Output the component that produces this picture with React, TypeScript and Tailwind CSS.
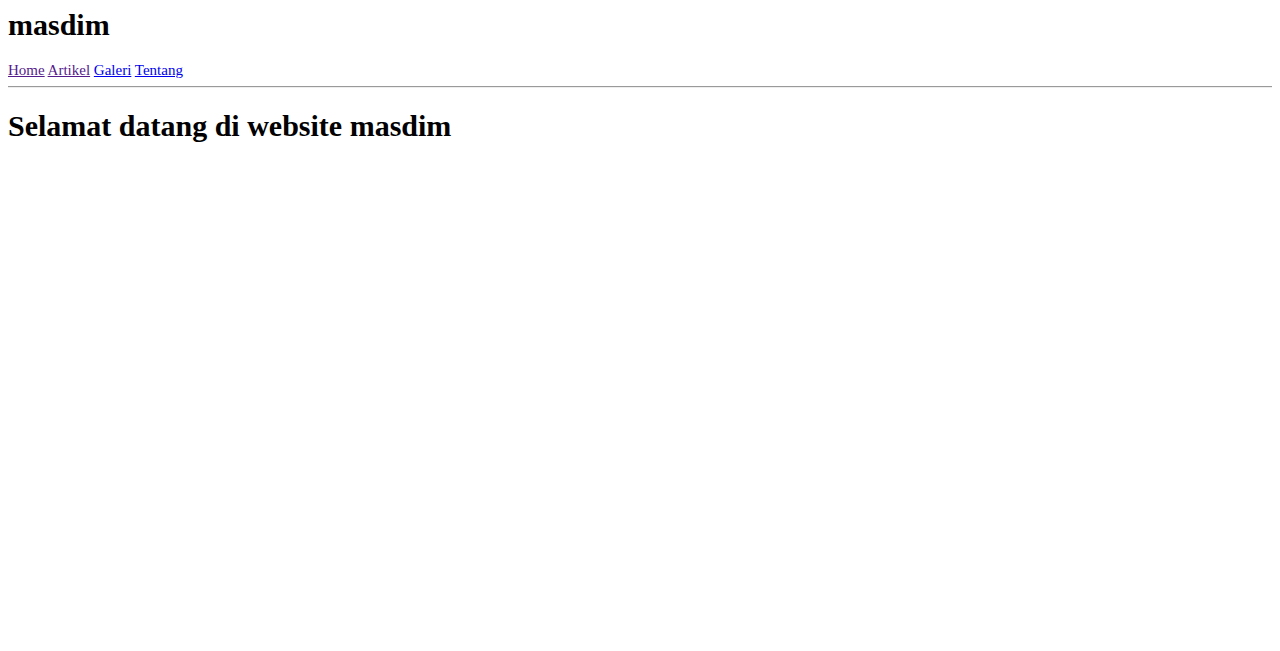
export default function App() {
  return (
    <div className="min-h-screen bg-white px-[8px] pt-[8px] text-black font-['Liberation_Serif','Times_New_Roman',serif]">
      <h1 className="text-[30px] font-bold leading-[34px]">masdim</h1>

      <nav className="mt-[20px] text-[15px] leading-[17px]">
        <a href="#" className="text-[#551a8b] underline">Home</a>{' '}
        <a href="#" className="text-[#551a8b] underline">Artikel</a>{' '}
        <a href="#" className="text-[#0000ee] underline">Galeri</a>{' '}
        <a href="#" className="text-[#0000ee] underline">Tentang</a>
      </nav>

      <hr className="mt-[7px] border-t border-b border-t-[#9a9a9a] border-b-[#eeeeee]" />

      <h1 className="mt-[21px] text-[30px] font-bold leading-[34px]">Selamat datang di website masdim</h1>
    </div>
  )
}
